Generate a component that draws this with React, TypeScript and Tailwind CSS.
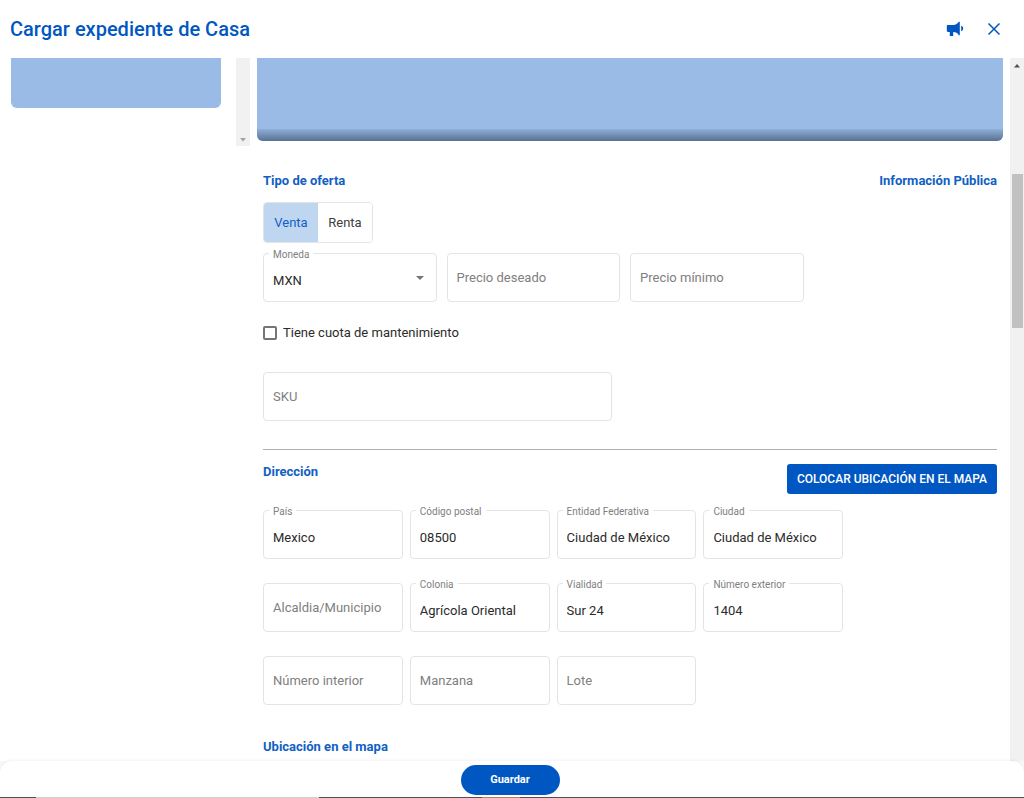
import { useState } from "react";
import type { ReactNode } from "react";

type FieldProps = {
  id: string;
  label: string;
  value?: string;
};

const addressFields: FieldProps[] = [
  { id: "pais", label: "País", value: "Mexico" },
  { id: "codigo-postal", label: "Código postal", value: "08500" },
  { id: "entidad", label: "Entidad Federativa", value: "Ciudad de México" },
  { id: "ciudad", label: "Ciudad", value: "Ciudad de México" },
  { id: "alcaldia", label: "Alcaldia/Municipio" },
  { id: "colonia", label: "Colonia", value: "Agrícola Oriental" },
  { id: "vialidad", label: "Vialidad", value: "Sur 24" },
  { id: "numero-exterior", label: "Número exterior", value: "1404" },
  { id: "numero-interior", label: "Número interior" },
  { id: "manzana", label: "Manzana" },
  { id: "lote", label: "Lote" },
];

function FloatingLabel({ id, children }: { id: string; children: ReactNode }) {
  return (
    <label
      htmlFor={id}
      className="absolute -top-1 left-1.5 bg-white px-1 text-[10px] leading-3 text-[#808080]"
    >
      {children}
    </label>
  );
}

// Outlined text field: the label floats on the border once there is a value
function Field({ id, label, value: initial = "" }: FieldProps) {
  const [value, setValue] = useState(initial);

  return (
    <div className="relative">
      <input
        id={id}
        type="text"
        value={value}
        onChange={(e) => setValue(e.target.value)}
        className="h-[49px] w-full rounded border border-[#e4e4e4] bg-transparent px-[9px] pt-1.5 text-[13px] text-[#2b2b2b] outline-none"
      />
      {value ? (
        <FloatingLabel id={id}>{label}</FloatingLabel>
      ) : (
        <label
          htmlFor={id}
          className="pointer-events-none absolute inset-0 flex items-center px-2.5 text-[13px] text-[#808080]"
        >
          {label}
        </label>
      )}
    </div>
  );
}

function SectionTitle({ children }: { children: ReactNode }) {
  return (
    <h2 className="text-[13px] font-bold leading-4 text-[#1160c4]">
      {children}
    </h2>
  );
}

function OfferToggle() {
  const [offer, setOffer] = useState("Venta");

  return (
    <div className="mt-[13px] flex h-[41px] w-[110px] overflow-hidden rounded border border-[#e4e4e4] text-[13px]">
      {["Venta", "Renta"].map((name) => (
        <button
          key={name}
          type="button"
          aria-pressed={offer === name}
          onClick={() => setOffer(name)}
          className={
            offer === name
              ? "flex-1 bg-[#bfd6f0] text-[#1160c4]"
              : "flex-1 bg-white text-[#404040]"
          }
        >
          {name}
        </button>
      ))}
    </div>
  );
}

export default function App() {
  return (
    <div className="flex h-screen flex-col overflow-hidden bg-white font-['Roboto',sans-serif] text-[#2b2b2b]">
      <header className="flex h-[58px] shrink-0 items-center justify-between pl-2.5 pr-[22px]">
        <h1 className="text-[20px] font-medium leading-6 text-[#0057c2]">
          Cargar expediente de Casa
        </h1>
        <div className="flex items-center gap-[22px] text-[#0057c2]">
          <button type="button" aria-label="Anuncios">
            <svg viewBox="0 0 18 16" className="h-4 w-[18px]" fill="currentColor">
              <path d="M2 4h5.500c2.100 0 4.200-1.200 5.300-3.200h1v13.400h-1c-1.100-2-3.200-3.200-5.300-3.200H7.200v4H3.800v-4H2C1.200 11 .8 10.500 .8 9.800V5.200C.8 4.500 1.200 4 2 4z" />
              <path d="M15.200 4.800c1.400.5 2 1.500 2 2.700s-.6 2.200-2 2.700z" />
            </svg>
          </button>
          <button type="button" aria-label="Cerrar">
            <svg viewBox="0 0 16 16" className="size-4" fill="none" stroke="currentColor" strokeWidth="1.5">
              <path d="M2.500 2.500l11 11M13.500 2.500l-11 11" />
            </svg>
          </button>
        </div>
      </header>

      <div className="flex min-h-0 flex-1">
        <aside className="flex w-[250px] shrink-0 items-start justify-between pl-[11px]">
          <div className="h-[50px] w-[210px] rounded-b-md bg-[#9abbe6]" />
          <div className="flex h-[88px] w-3.5 items-end justify-center bg-[#f1f1f1] pb-1">
            <svg viewBox="0 0 6 4" className="h-1 w-1.5" fill="#a3a3a3">
              <path d="M0 0h6L3 3.500z" />
            </svg>
          </div>
        </aside>

        <main className="min-w-0 flex-1 overflow-hidden px-[7px]">
          <div className="flex h-[83px] flex-col justify-end overflow-hidden rounded-b-md bg-[#9abbe6]">
            <div className="h-3 bg-linear-to-b from-[#8fafd8] to-[#5a7292]" />
          </div>

          <form className="px-1.5 pt-8" onSubmit={(e) => e.preventDefault()}>
            <div className="flex justify-between">
              <SectionTitle>Tipo de oferta</SectionTitle>
              <SectionTitle>Información Pública</SectionTitle>
            </div>

            <OfferToggle />

            <div className="mt-2.5 grid grid-cols-4">
              <div className="pr-2.5">
                <div className="relative">
                  <select
                    id="moneda"
                    defaultValue="MXN"
                    className="h-[49px] w-full appearance-none rounded border border-[#e4e4e4] bg-transparent px-[9px] pt-1.5 text-[13px] outline-none"
                  >
                    <option>MXN</option>
                    <option>USD</option>
                  </select>
                  <FloatingLabel id="moneda">Moneda</FloatingLabel>
                  <svg
                    viewBox="0 0 8 4"
                    className="pointer-events-none absolute right-[13px] top-[23px] h-1 w-2"
                    fill="#757575"
                  >
                    <path d="M0 0h8L4 4z" />
                  </svg>
                </div>
              </div>
              <div className="pr-2.5">
                <Field id="precio-deseado" label="Precio deseado" />
              </div>
              <div className="pr-2.5">
                <Field id="precio-minimo" label="Precio mínimo" />
              </div>
            </div>

            <label className="mt-[23px] flex items-center gap-1.5 text-[13px] leading-4">
              <input
                type="checkbox"
                className="size-[14px] appearance-none rounded-xs border-2 border-[#757575] checked:border-[#0057c2] checked:bg-[#0057c2]"
              />
              Tiene cuota de mantenimiento
            </label>

            <div className="mt-[31px] w-1/2 pr-[18px]">
              <Field id="sku" label="SKU" />
            </div>

            <hr className="mt-7 border-[#b0b0b0]" />

            <div className="mt-3.5 flex items-start justify-between">
              <SectionTitle>Dirección</SectionTitle>
              <button
                type="button"
                className="h-[30px] rounded-[3px] bg-[#0057c2] px-2.5 text-[12px] font-medium text-white"
              >
                COLOCAR UBICACIÓN EN EL MAPA
              </button>
            </div>

            <div className="mt-4 flex flex-wrap gap-y-6">
              {addressFields.map((field, i) => (
                <div
                  key={field.id}
                  className={
                    i % 4 === 3 ? "mr-[20%] w-1/5 pr-[7px]" : "w-1/5 pr-[7px]"
                  }
                >
                  <Field {...field} />
                </div>
              ))}
            </div>

            <div className="pt-[34px]">
              <SectionTitle>Ubicación en el mapa</SectionTitle>
            </div>
          </form>
        </main>

        {/* Page scrollbar */}
        <div className="flex w-3.5 shrink-0 flex-col items-center bg-[#f1f1f1] pt-1.5">
          <svg viewBox="0 0 6 4" className="h-1 w-1.5" fill="#505050">
            <path d="M0 3.500h6L3 0z" />
          </svg>
          <div className="mt-[106px] h-[154px] w-[11px] bg-[#c1c1c1]" />
        </div>
      </div>

      <div className="shrink-0 bg-[#f8f8f8]">
        <footer className="flex justify-center rounded-t-xl bg-white pb-0.5 pr-1 pt-1 shadow-[0_-1px_3px_rgba(0,0,0,0.05)]">
          <button
            type="button"
            className="h-[30px] w-[99px] rounded-full bg-[#0057c2] text-[11px] font-bold text-white"
          >
            Guardar
          </button>
        </footer>
        {/* Sliver of the page behind the dialog */}
        <div className="flex h-px bg-[#505050]">
          <div className="w-9" />
          <div className="w-[283px] bg-[#cfcfcf]" />
          <div className="w-[163px]" />
          <div className="w-[38px] bg-[#b08050]" />
        </div>
      </div>
    </div>
  );
}
